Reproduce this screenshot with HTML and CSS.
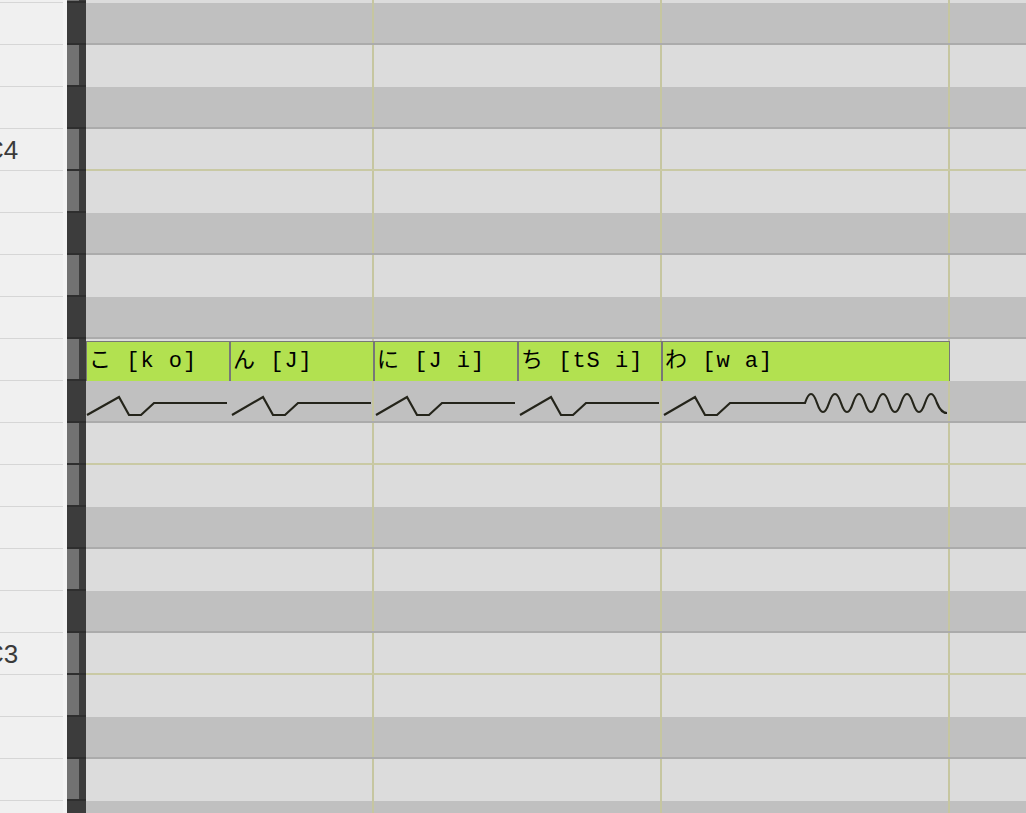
FILE: index.html
```html
<!DOCTYPE html>
<html lang="ja">
<head>
  <meta charset="UTF-8">
  <title>Piano Roll</title>
  <link rel="stylesheet" href="styles.css">
</head>
<body>
  <div class="roll">
    <!-- E4 -->
    <div class="row w"><div class="key"></div><div class="pad"></div><div class="strip"></div><div class="lane"></div></div>
    <div class="row b"><div class="key"></div><div class="pad"></div><div class="strip"></div><div class="lane"></div></div>
    <div class="row w"><div class="key"></div><div class="pad"></div><div class="strip"></div><div class="lane"></div></div>
    <div class="row b"><div class="key"></div><div class="pad"></div><div class="strip"></div><div class="lane"></div></div>
    <!-- C4 -->
    <div class="row w sep"><div class="key"><span class="label">C4</span></div><div class="pad"></div><div class="strip"></div><div class="lane"></div></div>
    <div class="row w"><div class="key"></div><div class="pad"></div><div class="strip"></div><div class="lane"></div></div>
    <div class="row b"><div class="key"></div><div class="pad"></div><div class="strip"></div><div class="lane"></div></div>
    <div class="row w"><div class="key"></div><div class="pad"></div><div class="strip"></div><div class="lane"></div></div>
    <div class="row b"><div class="key"></div><div class="pad"></div><div class="strip"></div><div class="lane"></div></div>
    <!-- G3: notes -->
    <div class="row w">
      <div class="key"></div><div class="pad"></div><div class="strip"></div>
      <div class="lane">
        <div class="notes">
          <div class="note">こ [k o]</div>
          <div class="note">ん [J]</div>
          <div class="note">に [J i]</div>
          <div class="note">ち [tS i]</div>
          <div class="note long">わ [w a]</div>
        </div>
      </div>
    </div>
    <!-- F#3: pitch curves -->
    <div class="row b">
      <div class="key"></div><div class="pad"></div><div class="strip"></div>
      <div class="lane">
        <svg class="pitch" width="864" height="42" viewBox="0 0 864 42">
          <path d="M1 34 L33 16 L43 34 L55 34 L68 22 L141 22"/>
          <path d="M146 34 L177 16 L187 34 L199 34 L212 22 L285 22"/>
          <path d="M290 34 L321 16 L331 34 L343 34 L356 22 L429 22"/>
          <path d="M434 34 L465 16 L475 34 L487 34 L500 22 L573 22"/>
          <path d="M578 34 L609 16 L619 34 L631 34 L644 22 L719 22 Q725 4 731 22 T743 22 T755 22 T767 22 T779 22 T791 22 T803 22 T815 22 T827 22 T839 22 T851 22 Q855 32 861 32"/>
        </svg>
      </div>
    </div>
    <!-- F3 -->
    <div class="row w sep"><div class="key"></div><div class="pad"></div><div class="strip"></div><div class="lane"></div></div>
    <div class="row w"><div class="key"></div><div class="pad"></div><div class="strip"></div><div class="lane"></div></div>
    <div class="row b"><div class="key"></div><div class="pad"></div><div class="strip"></div><div class="lane"></div></div>
    <div class="row w"><div class="key"></div><div class="pad"></div><div class="strip"></div><div class="lane"></div></div>
    <div class="row b"><div class="key"></div><div class="pad"></div><div class="strip"></div><div class="lane"></div></div>
    <!-- C3 -->
    <div class="row w sep"><div class="key"><span class="label">C3</span></div><div class="pad"></div><div class="strip"></div><div class="lane"></div></div>
    <div class="row w"><div class="key"></div><div class="pad"></div><div class="strip"></div><div class="lane"></div></div>
    <div class="row b"><div class="key"></div><div class="pad"></div><div class="strip"></div><div class="lane"></div></div>
    <div class="row w"><div class="key"></div><div class="pad"></div><div class="strip"></div><div class="lane"></div></div>
    <div class="row b"><div class="key"></div><div class="pad"></div><div class="strip"></div><div class="lane"></div></div>
  </div>
</body>
</html>
```

FILE: styles.css
```css
body, html {
  margin: 0;
  padding: 0;
  width: 100%;
  height: 100%;
  overflow: hidden;
  background-color: #f0f0f0;
  font-family: "Liberation Sans", Arial, sans-serif;
}

.roll {
  margin-top: -39px;
}

.row {
  display: flex;
  height: 42px;
}

/* 건반 영역 */
.key {
  width: 63px;
  box-sizing: border-box;
  background-color: #f0f0f0;
  border-bottom: 1px solid #d6d6d6;
  overflow: hidden;
}

.label {
  display: block;
  font-size: 26px;
  line-height: 42px;
  color: #3a3a3a;
  text-indent: -15px;
  white-space: nowrap;
}

.pad {
  width: 4px;
  background-color: #f4f4f4;
}

.strip {
  width: 19px;
  box-sizing: border-box;
  border-bottom: 2px solid #2e2e2e;
}

.w .strip {
  background: linear-gradient(to right, #727272 0 12px, #3c3c3c 12px);
}

.b .strip {
  background: #3c3c3c;
}

/* 노트 영역 */
.lane {
  flex: 1;
  box-sizing: border-box;
  background-image: repeating-linear-gradient(to right, transparent 0 286px, #c6c6a0 286px 288px);
}

.w .lane {
  background-color: #dcdcdc;
}

.b .lane {
  background-color: #c0c0c0;
  border-bottom: 2px solid #ababab;
}

.sep .lane {
  border-bottom: 2px solid #c9c9a4;
}

.notes {
  display: flex;
  padding-top: 2px;
}

.note {
  width: 144px;
  height: 41px;
  box-sizing: border-box;
  padding-left: 2px;
  border: 1px solid #777;
  background-color: #b2e150;
  color: #000;
  font-family: "Liberation Mono", "Noto Sans CJK JP", monospace;
  font-size: 22px;
  line-height: 40px;
  letter-spacing: 1px;
  white-space: pre;
  overflow: hidden;
}

.note.long {
  width: 288px;
}

.pitch {
  display: block;
}

.pitch path {
  fill: none;
  stroke: #24241a;
  stroke-width: 2.2;
  stroke-linejoin: miter;
}
```
